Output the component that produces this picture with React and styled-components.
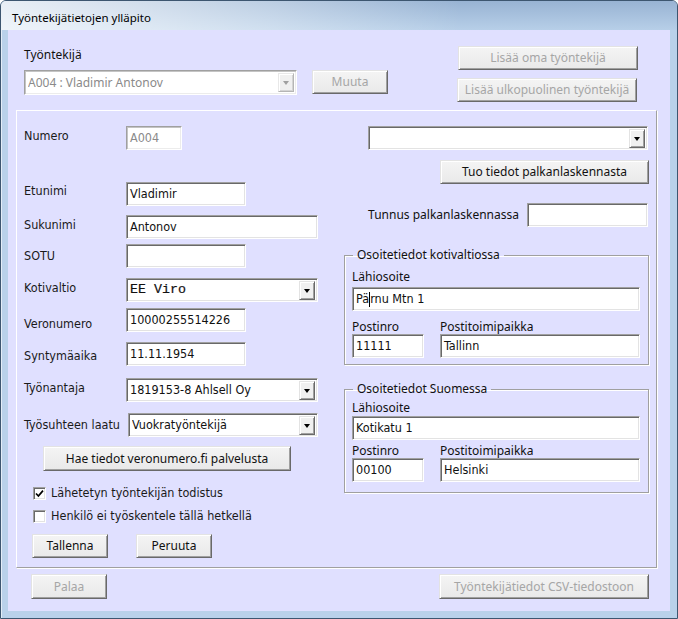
import React from "react";
import styled, { createGlobalStyle } from "styled-components";

const ui = `"Noto Sans", "Open Sans", sans-serif`;
const tahoma = `"DejaVu Sans Condensed", "DejaVu Sans", sans-serif`;

const GlobalStyle = createGlobalStyle`
  html, body { margin: 0; padding: 0; background: #fff; }
  body { font-family: ${ui}; color: #111; }
`;

const Win = styled.div`
  width: 678px;
  height: 619px;
  box-sizing: border-box;
  border: 1px solid #3d5670;
  border-radius: 6px 6px 0 0;
  background: #b9d1ea;
  box-shadow: inset 1px 1px 0 rgba(255,255,255,0.6);
  display: flex;
  flex-direction: column;
  overflow: hidden;
`;

const TitleBar = styled.div`
  height: 29px;
  flex: none;
  box-sizing: border-box;
  padding: 3px 0 0 11px;
  display: flex;
  align-items: center;
  font: 11.5px ${ui};
  color: #000;
  background:
    linear-gradient(to right, rgba(255,255,255,0.78) 0%, rgba(255,255,255,0.35) 40%, rgba(255,255,255,0) 68%),
    linear-gradient(to bottom, #98b3d3, #b7cfe8);
`;

const Client = styled.div`
  flex: 1;
  margin: 0 7px 7px;
  background: #e0e0ff;
  display: flex;
  flex-direction: column;
`;

const Header = styled.div`
  height: 80px;
  flex: none;
  box-sizing: border-box;
  padding: 0 32px 0 16px;
  display: flex;
  justify-content: space-between;
`;

const HeaderLeft = styled.div`
  padding-top: 17px;
`;

const HeaderRight = styled.div`
  padding-top: 16px;
  display: flex;
  flex-direction: column;
  align-items: flex-end;
  gap: 8px;
`;

const Caption = styled.div`
  font: 12px/16px ${ui};
  color: #111;
`;

const ComboRow = styled.div`
  margin-top: 7px;
  display: flex;
  gap: 15px;
`;

const Button = styled.button`
  width: ${p => p.$w}px;
  height: ${p => p.$h || 24}px;
  margin: 0 ${p => p.$mr || 0}px 0 ${p => p.$ml || 0}px;
  margin-top: ${p => p.$mt || 0}px;
  padding: 0 0 1px;
  box-sizing: border-box;
  font: 12px ${ui};
  color: ${p => (p.disabled ? "#a6a6a6" : "#111")};
  background: linear-gradient(#f4f4f4, #e9e9e9);
  border: 1px solid;
  border-color: #e3e3e3 #696969 #696969 #e3e3e3;
  box-shadow: inset 1px 1px 0 #fff, inset -1px -1px 0 #a0a0a0;
  white-space: nowrap;
  align-self: ${p => p.$align || "auto"};
  flex: none;
`;

const sunken = `
  background: #fff;
  border: 1px solid;
  border-color: #a0a0a0 #fff #fff #a0a0a0;
  box-shadow: inset 1px 1px 0 #696969, inset -1px -1px 0 #e3e3e3;
`;

const Textbox = styled.div`
  width: ${p => p.$w}px;
  height: 24px;
  flex: none;
  box-sizing: border-box;
  margin-top: ${p => p.$mt || 0}px;
  ${sunken}
  ${p => p.$disabled && `box-shadow: inset 1px 1px 0 #c4c4c4, inset -1px -1px 0 #ececec;`}
  padding: 0 3px;
  display: flex;
  align-items: center;
  font: 12.5px/16px ${tahoma};
  font-stretch: condensed;
  color: ${p => (p.$disabled ? "#8a8a8a" : "#111")};
  white-space: nowrap;
  overflow: hidden;
`;

const Caret = styled.span`
  display: inline-block;
  width: 1px;
  height: 15px;
  background: #000;
  vertical-align: middle;
`;

const Select = styled.div`
  width: ${p => p.$w}px;
  height: ${p => p.$h || 24}px;
  flex: none;
  box-sizing: border-box;
  margin-left: ${p => p.$ml || 0}px;
  ${sunken}
  ${p => p.$disabled && `box-shadow: inset 1px 1px 0 #c4c4c4, inset -1px -1px 0 #ececec;`}
  padding: 0 2px 0 3px;
  display: flex;
  align-items: center;
  gap: 2px;
`;

const SelectText = styled.span`
  flex: 1;
  white-space: nowrap;
  overflow: hidden;
  color: ${p => (p.$disabled ? "#8a8a8a" : "#111")};
  font: ${p =>
    p.$mono
      ? `13.3px/16px "Liberation Mono", monospace`
      : p.$ui
      ? `12px/16px ${ui}`
      : `12.5px/16px ${tahoma}`};
  font-stretch: ${p => (p.$mono || p.$ui ? "normal" : "condensed")};
  -webkit-text-stroke: ${p => (p.$mono ? "0.2px #111" : "0")};
`;

const DropBtn = styled.span`
  width: 16px;
  height: ${p => p.$h || 19}px;
  flex: none;
  box-sizing: border-box;
  background: #f0f0f0;
  border: 1px solid;
  border-color: ${p => (p.$disabled ? "#e8e8e8 #b5b5b5 #b5b5b5 #e8e8e8" : "#e3e3e3 #696969 #696969 #e3e3e3")};
  box-shadow: inset 1px 1px 0 #fff, inset -1px -1px 0 ${p => (p.$disabled ? "#d4d4d4" : "#a0a0a0")};
  display: flex;
  align-items: center;
  justify-content: center;
  &::after {
    content: "";
    border-top: 4px solid ${p => (p.$disabled ? "#a0a0a0" : "#000")};
    border-left: 3.5px solid transparent;
    border-right: 3.5px solid transparent;
    margin-top: 1px;
  }
`;

const Panel = styled.div`
  margin-left: 8px;
  width: 641px;
  height: 458px;
  flex: none;
  box-sizing: border-box;
  border: 1px solid;
  border-color: #fff #a0a0a0 #a0a0a0 #fff;
  box-shadow: 1px 1px 0 #fff;
  padding: 15px 7px 0 7px;
  display: grid;
  grid-template-columns: 320px 305px;
  align-items: start;
`;

const Column = styled.div`
  display: flex;
  flex-direction: column;
`;

const FormRow = styled.div`
  display: flex;
  align-items: flex-start;
  margin-top: ${p => p.$mt || 0}px;
`;

const FieldLabel = styled.div`
  width: ${p => p.$w || 102}px;
  flex: none;
  padding-top: ${p => p.$off || 0}px;
  font: 12.5px/16px ${tahoma};
  font-stretch: condensed;
  color: #1a1a1a;
  white-space: nowrap;
`;

const CheckRow = styled.div`
  display: flex;
  align-items: center;
  gap: 5px;
  margin: ${p => p.$mt || 0}px 0 0 9px;
  font: 12.5px/16px ${tahoma};
  font-stretch: condensed;
  color: #1a1a1a;
`;

const CheckBox = styled.span`
  width: 13px;
  height: 13px;
  flex: none;
  box-sizing: border-box;
  ${sunken}
  display: flex;
  align-items: center;
  justify-content: center;
`;

const ButtonRow = styled.div`
  display: flex;
  gap: ${p => p.$gap || 0}px;
  margin: ${p => p.$mt || 0}px 0 0 ${p => p.$ml || 0}px;
`;

const TunnusRow = styled.div`
  display: flex;
  justify-content: flex-end;
  align-items: center;
  gap: 8px;
  margin: ${p => p.$mt || 0}px 1px 0 0;
`;

const UiLabel = styled.div`
  font: 12px/14px ${ui};
  color: #111;
  white-space: nowrap;
  margin-top: ${p => p.$mt || 0}px;
`;

const Group = styled.fieldset`
  margin: ${p => p.$mt || 0}px 0 0;
  padding: ${p => p.$pt}px 7px ${p => p.$pb}px 7px;
  border: 1px solid #a0a0a0;
  box-shadow: inset 1px 1px 0 #fff, 1px 1px 0 #fff;
  min-width: 0;
`;

const Legend = styled.legend`
  margin-left: 1px;
  padding: 0 4px;
  font: 12px/16px ${ui};
  color: #111;
`;

const PostGrid = styled.div`
  display: grid;
  grid-template-columns: 88px 200px;
  margin-top: ${p => p.$mt || 0}px;
`;

const Footer = styled.div`
  display: flex;
  justify-content: space-between;
  padding: 6px 21px 0 23px;
`;

const Check = () => (
  <svg width="9" height="9" viewBox="0 0 9 9">
    <path d="M1 4.5 L3.4 7 L8 1.6" fill="none" stroke="#000" strokeWidth="1.7" />
  </svg>
);

const AddressGroup = ({ title, street, zip, city, gaps }) => (
  <Group $mt={gaps.mt} $pt={gaps.pt} $pb={gaps.pb}>
    <Legend>{title}</Legend>
    <UiLabel>Lähiosoite</UiLabel>
    <Textbox $w={288} $mt={gaps.street}>{street}</Textbox>
    <PostGrid $mt={gaps.post}>
      <UiLabel>Postinro</UiLabel>
      <UiLabel>Postitoimipaikka</UiLabel>
      <Textbox $w={72}>{zip}</Textbox>
      <Textbox $w={200}>{city}</Textbox>
    </PostGrid>
  </Group>
);

export default function App() {
  return (
    <>
      <GlobalStyle />
      <Win>
        <TitleBar>Työntekijätietojen ylläpito</TitleBar>
        <Client>
          <Header>
            <HeaderLeft>
              <Caption>Työntekijä</Caption>
              <ComboRow>
                <Select $w={273} $h={25} $disabled>
                  <SelectText $ui $disabled>A004 : Vladimir Antonov</SelectText>
                  <DropBtn $disabled />
                </Select>
                <Button $w={76} disabled>Muuta</Button>
              </ComboRow>
            </HeaderLeft>
            <HeaderRight>
              <Button $w={180} disabled>Lisää oma työntekijä</Button>
              <Button $w={180} $mr={1} disabled>Lisää ulkopuolinen työntekijä</Button>
            </HeaderRight>
          </Header>

          <Panel>
            <Column>
              <FormRow>
                <FieldLabel $off={2}>Numero</FieldLabel>
                <Textbox $w={56} $disabled>A004</Textbox>
              </FormRow>
              <FormRow $mt={32}>
                <FieldLabel $off={1}>Etunimi</FieldLabel>
                <Textbox $w={120}>Vladimir</Textbox>
              </FormRow>
              <FormRow $mt={9}>
                <FieldLabel $off={2}>Sukunimi</FieldLabel>
                <Textbox $w={192}>Antonov</Textbox>
              </FormRow>
              <FormRow $mt={5}>
                <FieldLabel $off={4}>SOTU</FieldLabel>
                <Textbox $w={120} />
              </FormRow>
              <FormRow $mt={10}>
                <FieldLabel $off={2}>Kotivaltio</FieldLabel>
                <Select $w={192}>
                  <SelectText $mono>EE Viro</SelectText>
                  <DropBtn />
                </Select>
              </FormRow>
              <FormRow $mt={6}>
                <FieldLabel $off={8}>Veronumero</FieldLabel>
                <Textbox $w={120}>10000255514226</Textbox>
              </FormRow>
              <FormRow $mt={10}>
                <FieldLabel $off={6}>Syntymäaika</FieldLabel>
                <Textbox $w={120}>11.11.1954</Textbox>
              </FormRow>
              <FormRow $mt={12}>
                <FieldLabel $off={2}>Työnantaja</FieldLabel>
                <Select $w={192}>
                  <SelectText>1819153-8 Ahlsell Oy</SelectText>
                  <DropBtn />
                </Select>
              </FormRow>
              <FormRow $mt={11}>
                <FieldLabel $w={104} $off={4}>Työsuhteen laatu</FieldLabel>
                <Select $w={190}>
                  <SelectText>Vuokratyöntekijä</SelectText>
                  <DropBtn />
                </Select>
              </FormRow>
              <Button $w={248} $h={25} $ml={19} $mt={9}>Hae tiedot veronumero.fi palvelusta</Button>
              <CheckRow $mt={14}>
                <CheckBox><Check /></CheckBox>
                Lähetetyn työntekijän todistus
              </CheckRow>
              <CheckRow $mt={7}>
                <CheckBox />
                Henkilö ei työskentele tällä hetkellä
              </CheckRow>
              <ButtonRow $mt={10} $ml={8} $gap={28}>
                <Button $w={76}>Tallenna</Button>
                <Button $w={76}>Peruuta</Button>
              </ButtonRow>
            </Column>

            <Column>
              <Select $w={280} $ml={24}>
                <SelectText />
                <DropBtn />
              </Select>
              <Button $w={209} $mt={10} $align="flex-end">Tuo tiedot palkanlaskennasta</Button>
              <TunnusRow $mt={19}>
                <UiLabel>Tunnus palkanlaskennassa</UiLabel>
                <Textbox $w={121} />
              </TunnusRow>
              <AddressGroup
                title="Osoitetiedot kotivaltiossa"
                street={<>Pä<Caret />rnu Mtn 1</>}
                zip="11111"
                city="Tallinn"
                gaps={{ mt: 20, pt: 7, pb: 6, street: 3, post: 9 }}
              />
              <AddressGroup
                title="Osoitetiedot Suomessa"
                street="Kotikatu 1"
                zip="00100"
                city="Helsinki"
                gaps={{ mt: 16, pt: 4, pb: 10, street: 1, post: 4 }}
              />
            </Column>
          </Panel>

          <Footer>
            <Button $w={76} $h={25} disabled>Palaa</Button>
            <Button $w={210} $h={25} disabled>Työntekijätiedot CSV-tiedostoon</Button>
          </Footer>
        </Client>
      </Win>
    </>
  );
}
